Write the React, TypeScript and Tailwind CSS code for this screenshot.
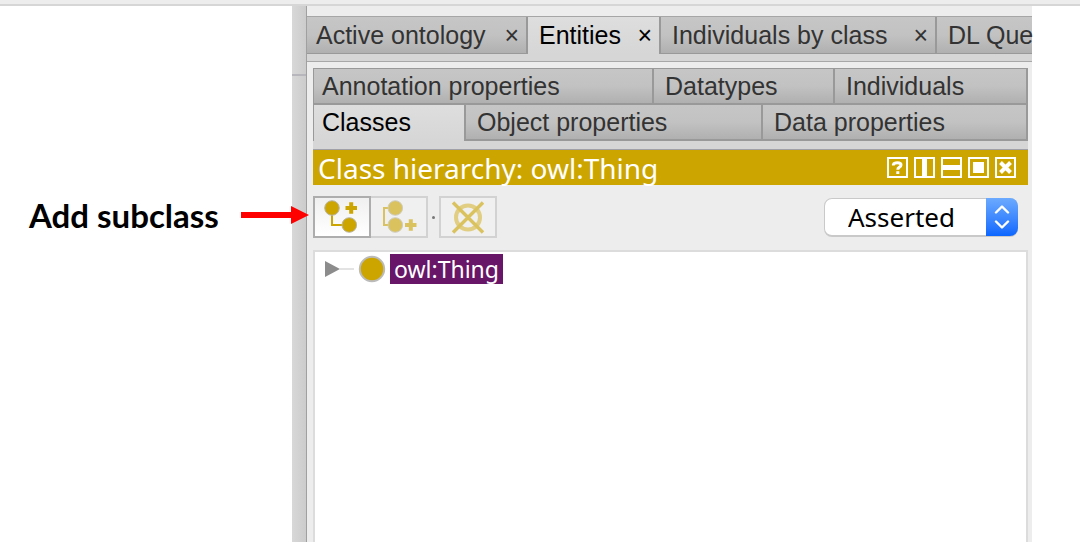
import React from 'react';

const mainTabs = [
  { label: 'Active ontology', width: 'w-[221px] pl-[9px]', active: false, closable: true },
  { label: 'Entities', width: 'w-[133px] pl-[11px]', active: true, closable: true },
  { label: 'Individuals by class', width: 'w-[276px] pl-[11px]', active: false, closable: true },
  { label: 'DL Que', width: 'flex-1 pl-[11px]', active: false, closable: false },
];

const entityTabs = [
  [
    { label: 'Annotation properties', width: 'w-[340px] pl-2', active: false },
    { label: 'Datatypes', width: 'w-[181px] pl-[11px]', active: false },
    { label: 'Individuals', width: 'flex-1 pl-[11px]', active: false },
  ],
  [
    { label: 'Classes', width: 'w-[152px] pl-2', active: true },
    { label: 'Object properties', width: 'w-[297px] pl-[11px]', active: false },
    { label: 'Data properties', width: 'flex-1 pl-[11px]', active: false },
  ],
];

const idleTab = 'bg-linear-to-b from-[#c6c6c6] via-[#c2c2c2] to-[#b0b0b0] text-[#333333]';
const activeTab = 'bg-linear-to-b from-[#dedede] to-[#d6d6d6] text-black';

const MainTabs: React.FC = () => (
  <div className="mt-[10px] border-t border-b border-t-[#a6a6a6] border-b-[#a8a8a8] bg-[#d6d6d6] pb-[7px]">
    <div className="flex h-[37px]">
      {mainTabs.map((tab) => (
        <div
          key={tab.label}
          className={`flex items-center justify-between border-[#999999] ${tab.width} ${
            tab.closable ? 'shrink-0 border-r-2 pr-[7px]' : 'min-w-0'
          } ${tab.active ? `pb-px ${activeTab}` : `border-b ${idleTab}`}`}
        >
          <button className="whitespace-nowrap text-[25px] leading-9">{tab.label}</button>
          {tab.closable && (
            <button className="text-[25px] leading-9" aria-label={`Close ${tab.label}`}>
              ×
            </button>
          )}
        </div>
      ))}
    </div>
  </div>
);

const EntityTabs: React.FC = () => (
  <div className="border-t border-[#999999] bg-[#d6d6d6] pb-2">
    {entityTabs.map((row, i) => (
      <div key={i} className="flex h-9 border-l border-[#999999]">
        {row.map((tab) => (
          <button
            key={tab.label}
            className={`whitespace-nowrap border-r-2 border-[#999999] text-left text-[25px] leading-8 ${tab.width} ${
              tab.active ? `pb-[2px] ${activeTab}` : `border-b-2 ${idleTab}`
            }`}
          >
            {tab.label}
          </button>
        ))}
      </div>
    ))}
  </div>
);

const viewControls = [
  {
    name: 'Help',
    shape: (
      <path
        d="M6.4 8.4 V7.6 Q7 5.8 10.4 5.8 Q14 5.8 14 8 Q14 9.4 12.2 10.3 Q10.8 11 10.8 12.8 M10.8 14.2 V17"
        fill="none"
        stroke="white"
        strokeWidth="3"
      />
    ),
  },
  { name: 'Split vertically', shape: <rect x="8" y="1" width="5" height="19" fill="white" /> },
  { name: 'Split horizontally', shape: <rect x="1" y="8" width="19" height="5" fill="white" /> },
  { name: 'Float', shape: <rect x="5" y="5" width="11" height="11" fill="white" /> },
  {
    name: 'Close view',
    shape: <path d="M5.5 5.5 L15.5 15.5 M15.5 5.5 L5.5 15.5" stroke="white" strokeWidth="4" />,
  },
];

const ViewHeader: React.FC = () => (
  <div className="flex h-9 items-center justify-between border-t border-[#a0a0a8] bg-[#cca500] pl-[5px] pr-3">
    <h2 className="whitespace-nowrap font-['Noto_Sans',sans-serif] text-[28px] leading-8 text-white">
      Class hierarchy: owl:Thing
    </h2>
    <div className="flex gap-[6px]">
      {viewControls.map((control) => (
        <button key={control.name} aria-label={control.name}>
          <svg className="block" width="21" height="21" viewBox="0 0 21 21">
            <rect x="1" y="1" width="19" height="19" fill="none" stroke="white" strokeWidth="2" />
            {control.shape}
          </svg>
        </button>
      ))}
    </div>
  </div>
);

const Toolbar: React.FC = () => (
  <div className="flex items-center justify-between pt-[11px] pr-[10px] pb-3">
    <div className="flex items-center">
      <button
        aria-label="Add subclass"
        className="h-[42px] w-[58px] border-2 border-[#adadad] bg-linear-to-b from-[#f0f0f0] to-white"
      >
        <svg className="block" width="54" height="38" viewBox="2 2 54 38">
          <path d="M19 12 V29 H36" fill="none" stroke="#cca500" strokeWidth="2" />
          <circle cx="19" cy="12" r="7.3" fill="#cca500" stroke="#b9b6a5" />
          <circle cx="36.3" cy="29" r="7.3" fill="#cca500" stroke="#b9b6a5" />
          <path d="M32.5 12 H44 M38.2 6.2 V17.8" stroke="#cca500" strokeWidth="4" />
        </svg>
      </button>
      <button
        disabled
        aria-label="Add sibling class"
        className="h-[42px] w-[57px] border-2 border-l-0 border-[#d2d2d2] bg-[#f0f0f0]"
      >
        <svg className="block opacity-60" width="55" height="38" viewBox="0 2 55 38">
          <path d="M24 12 H13 V29 H24" fill="none" stroke="#cca500" strokeWidth="2" />
          <circle cx="24.3" cy="12" r="7.3" fill="#cca500" stroke="#b9b6a5" />
          <circle cx="24.3" cy="29" r="7.3" fill="#cca500" stroke="#b9b6a5" />
          <path d="M34 29 H45.5 M39.8 23.2 V34.8" stroke="#cca500" strokeWidth="4" />
        </svg>
      </button>
      <span className="mx-1 size-[3px] rounded-full bg-[#777777]" />
      <button
        disabled
        aria-label="Delete class"
        className="h-[42px] w-[58px] border-2 border-[#d2d2d2] bg-[#f0f0f0]"
      >
        <svg className="block opacity-60" width="54" height="38" viewBox="2 2 54 38">
          <circle cx="29" cy="21.5" r="12" fill="none" stroke="#d8b93c" strokeWidth="4" />
          <path d="M14 6.5 L44 36.5 M44 6.5 L14 36.5" stroke="#cca500" strokeWidth="3.4" />
        </svg>
      </button>
    </div>

    <div className="relative">
      <select
        aria-label="Hierarchy mode"
        className="block h-[39px] w-[194px] appearance-none rounded-lg border border-b-2 border-[#c9c9c9] bg-white pl-[23px] font-['Noto_Sans',sans-serif] text-[26px] leading-8 text-black"
      >
        <option>Asserted</option>
        <option>Inferred</option>
      </select>
      <span className="pointer-events-none absolute top-0 right-0 flex h-[38px] w-8 items-center justify-center rounded-r-lg bg-linear-to-b from-[#6caaff] to-[#0a66ff]">
        <svg width="16" height="24" viewBox="0 0 16 24">
          <path
            d="M2 7.5 L8 1.5 L14 7.5 M2 16.5 L8 22.5 L14 16.5"
            fill="none"
            stroke="white"
            strokeWidth="2.4"
            strokeLinecap="round"
            strokeLinejoin="round"
          />
        </svg>
      </span>
    </div>
  </div>
);

const ClassTree: React.FC = () => (
  <ul className="flex-1 border-2 border-b-0 border-[#dcdcdc] bg-white pt-[2px] pl-[10px]">
    <li className="flex items-center">
      <svg className="mr-[3px] block" width="62" height="30" viewBox="0 0 62 30">
        <path d="M15 15 H29" stroke="#dddddd" strokeWidth="1.6" />
        <path d="M0 7 L15 15 L0 23 Z" fill="#8c8c8c" />
        <circle cx="47" cy="15" r="12.2" fill="#cca500" stroke="#bbbbbb" strokeWidth="2" />
      </svg>
      <button className="h-[30px] bg-[#681668] px-1 font-['Noto_Sans',sans-serif] text-[23px] leading-[30px] text-white">
        owl:Thing
      </button>
    </li>
  </ul>
);

const App: React.FC = () => {
  return (
    <div className="flex min-h-screen flex-col overflow-hidden bg-white font-['Liberation_Sans',Arial,sans-serif]">
      <div className="h-[6px] border-b-2 border-[#d6d6d6] bg-[#ededed]" />

      <div className="flex flex-1 pr-12">
        {/* Callout pointing at the first toolbar button */}
        <aside className="relative z-10 flex w-[292px] shrink-0 items-center self-start pt-[188px] pl-[29px]">
          <p className="w-[212px] shrink-0 whitespace-nowrap font-['Lato',sans-serif] text-[33px] leading-[42px] font-bold text-black">
            Add subclass
          </p>
          <svg className="block shrink-0" width="68" height="18" viewBox="0 0 68 18">
            <path d="M0 6 H50 V0 L68 9 L50 18 V12 H0 Z" fill="#ff0000" />
          </svg>
        </aside>

        {/* Window edge */}
        <div className="w-[15px] shrink-0 border-r border-[#a0a0a0] bg-linear-to-r from-[#d8d8d8] to-[#cccccc]">
          <div className="h-[70px] border-b-2 border-[#b6b6bc]" />
        </div>

        <main className="flex min-w-0 flex-1 flex-col bg-[#ededed]">
          <MainTabs />
          <section className="mt-[6px] mr-1 ml-[6px] flex flex-1 flex-col">
            <EntityTabs />
            <ViewHeader />
            <Toolbar />
            <ClassTree />
          </section>
        </main>
      </div>
    </div>
  );
};

export default App;
